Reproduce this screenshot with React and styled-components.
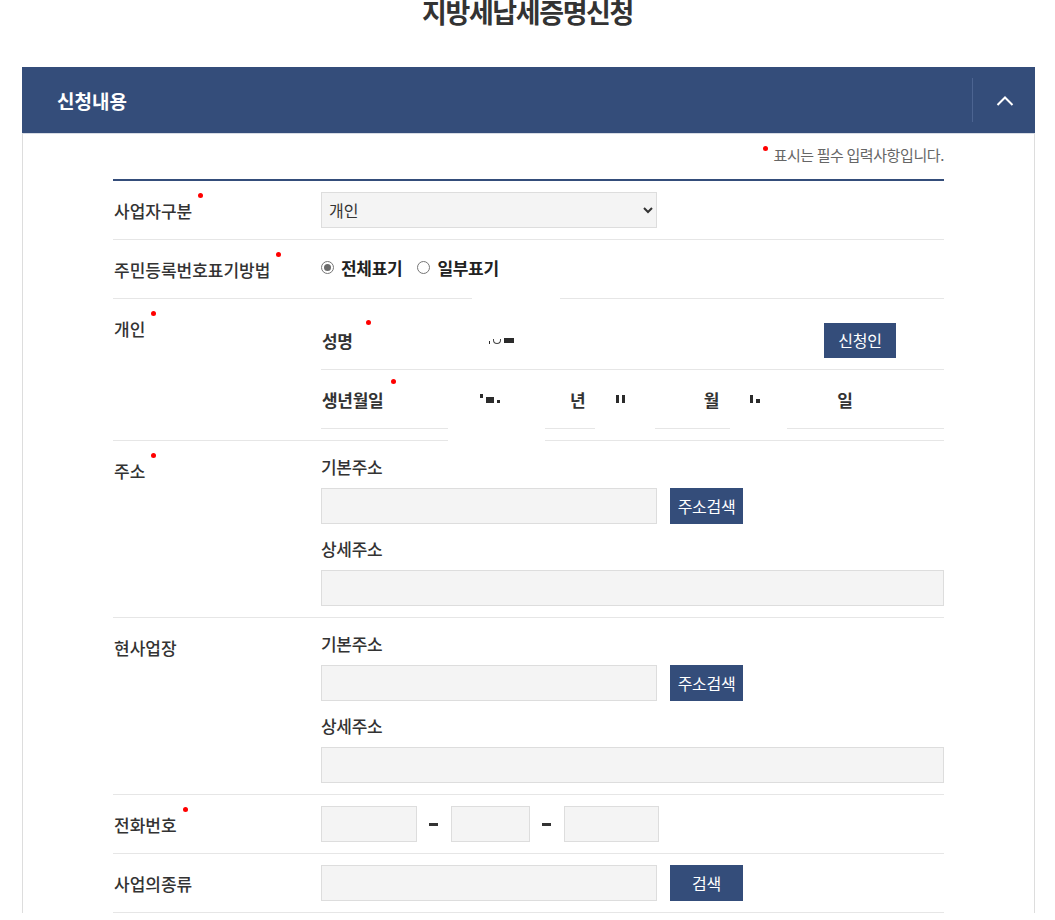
import styled, { createGlobalStyle } from 'styled-components';

const NAVY = '#344d7a';

const GlobalStyle = createGlobalStyle`
  * { box-sizing: border-box; }
  body {
    margin: 0;
    background: #fff;
    font-family: "Noto Sans CJK KR", "Noto Sans", sans-serif;
    color: #333;
  }
`;

const Page = styled.div`
  width: 1055px;
  overflow: hidden;
`;

const Title = styled.h1`
  margin: -5px 0 38px;
  font-size: 27px;
  line-height: 34px;
  font-weight: 700;
  letter-spacing: -1.4px;
  color: #333;
  text-align: center;
`;

const Panel = styled.section`
  margin-left: 22px;
  width: 1013px;
`;

const PanelHead = styled.div`
  height: 66px;
  background: ${NAVY};
  display: flex;
  align-items: center;
  justify-content: space-between;
  padding-left: 35px;
`;

const PanelTitle = styled.h2`
  margin: 0;
  font-size: 19px;
  font-weight: 700;
  letter-spacing: 0;
  color: #fff;
`;

const ToggleBtn = styled.button`
  width: 63px;
  height: 44px;
  border: none;
  border-left: 1px solid #4c6491;
  background: transparent;
  display: flex;
  align-items: center;
  justify-content: center;
  padding: 0 0 0 2px;
  cursor: pointer;
`;

const PanelBody = styled.div`
  border-left: 1px solid #ddd;
  border-right: 1px solid #ddd;
  border-top: 1px solid #d6dbe4;
  padding: 0 90px;
`;

const Notice = styled.p`
  margin: 0;
  padding: 11px 0 14px;
  text-align: right;
  font-size: 15px;
  line-height: 20px;
  letter-spacing: -0.4px;
  color: #666;
`;

const NoticeDot = styled.span`
  display: inline-block;
  width: 5px;
  height: 5px;
  border-radius: 50%;
  background: #f00;
  vertical-align: top;
  margin: 1px 6px 0 0;
`;

const Form = styled.div`
  border-top: 2px solid ${NAVY};
`;

const Row = styled.div`
  display: grid;
  grid-template-columns: 208px 1fr;
  border-bottom: 1px solid #e6e6e6;
`;

const Label = styled.div`
  padding: 20px 0 0 1px;
  font-size: 17px;
  line-height: 20px;
  font-weight: 500;
  letter-spacing: 0;
  color: #333;
`;

const Req = styled.span`
  display: inline-block;
  position: relative;
  top: -8px;
  width: 5px;
  height: 5px;
  margin-left: ${(p) => p.$gap || 6}px;
  border-radius: 50%;
  background: #f00;
  vertical-align: top;
`;

const Field = styled.div`
  padding: ${(p) => (p.$sub ? '12px 0 11px' : '11px 0')};
  display: flex;
  flex-direction: ${(p) => (p.$column ? 'column' : 'row')};
  align-items: ${(p) => (p.$column ? 'stretch' : 'center')};
  min-height: 58px;
`;

const Select = styled.select`
  width: 336px;
  height: 36px;
  padding: 0 3px;
  background: #f4f4f4;
  border: 1px solid #ddd;
  border-radius: 0;
  font-family: inherit;
  font-size: 16px;
  color: #333;
`;

const RadioGroup = styled.div`
  display: flex;
  align-items: center;
  height: 36px;
  gap: 15px;
  margin-top: -3px;
`;

const RadioLabel = styled.label`
  display: flex;
  align-items: center;
  gap: 7px;
  font-size: 17px;
  font-weight: 700;
  letter-spacing: -0.3px;
  color: #222;
`;

const RadioMark = styled.span`
  width: 13px;
  height: 13px;
  border-radius: 50%;
  border: 1px solid #767676;
  background: #fff;
  display: flex;
  align-items: center;
  justify-content: center;
  &::after {
    content: '';
    width: 7px;
    height: 7px;
    border-radius: 50%;
    background: ${(p) => (p.$on ? '#6b6b6b' : 'transparent')};
  }
`;

const SubRow = styled.div`
  position: relative;
  height: 59px;
  display: flex;
  align-items: center;
  border-bottom: 1px solid #e6e6e6;
`;

const SubLabel = styled.div`
  width: 150px;
  padding-left: 1px;
  font-size: 17px;
  font-weight: 700;
  letter-spacing: -0.3px;
  color: #333;
`;

const ValueBox = styled.div`
  width: ${(p) => p.$w}px;
  height: 36px;
  padding-left: ${(p) => p.$pad}px;
  display: flex;
  align-items: center;
  gap: 3px;
`;

const Blot = styled.span`
  display: inline-block;
  width: ${(p) => p.$w}px;
  height: ${(p) => p.$h}px;
  background: #2b2b2b;
  margin-top: ${(p) => p.$dy || 0}px;
  ${(p) => p.$round && 'background: transparent; border: 1px solid #444; border-top: none; border-radius: 0 0 4px 4px;'}
`;

const Mask = styled.span`
  position: absolute;
  background: #fff;
  left: ${(p) => p.$x}px;
  top: ${(p) => p.$y}px;
  width: ${(p) => p.$w}px;
  height: ${(p) => p.$h}px;
`;

const Unit = styled.span`
  margin: 0 8px 0 10px;
  font-size: 17px;
  font-weight: 700;
  color: #333;
`;

const Button = styled.button`
  width: ${(p) => p.$w || 73}px;
  height: ${(p) => p.$h || 36}px;
  border: none;
  background: ${NAVY};
  color: #fff;
  font-family: inherit;
  font-size: 16px;
  letter-spacing: -0.3px;
  padding: 0;
  flex-shrink: 0;
`;

const SmallLabel = styled.div`
  height: 30px;
  line-height: 30px;
  font-size: 17px;
  font-weight: 500;
  letter-spacing: -0.3px;
  color: #333;
  margin-top: ${(p) => p.$top || 0}px;
  margin-bottom: 6px;
`;

const InputLine = styled.div`
  display: flex;
  align-items: center;
  gap: 13px;
`;

const Input = styled.input`
  width: ${(p) => (p.$w ? `${p.$w}px` : '100%')};
  height: 36px;
  background: #f4f4f4;
  border: 1px solid #ddd;
  border-radius: 0;
  padding: 0 8px;
  font-family: inherit;
  font-size: 15px;
  flex-shrink: 0;
`;

const Dash = styled.span`
  display: inline-block;
  width: 9px;
  height: 3px;
  background: #333;
  margin: 0 13px 0 12px;
`;

function AddressFields() {
  return (
    <Field $column>
      <SmallLabel>기본주소</SmallLabel>
      <InputLine>
        <Input $w={336} />
        <Button>주소검색</Button>
      </InputLine>
      <SmallLabel $top={10}>상세주소</SmallLabel>
      <Input />
    </Field>
  );
}

export default function App() {
  return (
    <Page>
      <GlobalStyle />
      <Title>지방세납세증명신청</Title>
      <Panel>
        <PanelHead>
          <PanelTitle>신청내용</PanelTitle>
          <ToggleBtn aria-label="접기">
            <svg width="18" height="11" viewBox="0 0 18 11">
              <polyline points="1.5,10 9,2.5 16.5,10" fill="none" stroke="#fff" strokeWidth="2" />
            </svg>
          </ToggleBtn>
        </PanelHead>
        <PanelBody>
          <Notice>
            <NoticeDot />
            표시는 필수 입력사항입니다.
          </Notice>
          <Form>
            <Row>
              <Label>사업자구분<Req /></Label>
              <Field>
                <Select defaultValue="개인">
                  <option>개인</option>
                  <option>법인</option>
                </Select>
              </Field>
            </Row>
            <Row>
              <Label>주민등록번호표기방법<Req /></Label>
              <Field>
                <RadioGroup>
                  <RadioLabel><RadioMark $on />전체표기</RadioLabel>
                  <RadioLabel><RadioMark />일부표기</RadioLabel>
                </RadioGroup>
              </Field>
            </Row>
            <Row>
              <Label>개인<Req /></Label>
              <Field $column $sub>
                <SubRow>
                  <SubLabel>성명<Req $gap={13} /></SubLabel>
                  <ValueBox $w={353} $pad={18}>
                    <Blot $w={1} $h={3} $dy={4} />
                    <Blot $w={8} $h={5} $dy={2} $round />
                    <Blot $w={10} $h={5} $dy={0} />
                  </ValueBox>
                  <Button $w={72} $h={35}>신청인</Button>
                  <Mask $x={151} $y={-16} $w={88} $h={5} />
                </SubRow>
                <SubRow>
                  <SubLabel>생년월일<Req $gap={8} /></SubLabel>
                  <ValueBox $w={89} $pad={9}>
                    <Blot $w={3} $h={4} $dy={-6} />
                    <Blot $w={8} $h={6} $dy={2} />
                    <Blot $w={3} $h={3} $dy={4} />
                  </ValueBox>
                  <Unit>년</Unit>
                  <ValueBox $w={100} $pad={22}>
                    <Blot $w={3} $h={8} />
                    <Blot $w={3} $h={8} />
                  </ValueBox>
                  <Unit>월</Unit>
                  <ValueBox $w={100} $pad={23}>
                    <Blot $w={3} $h={8} />
                    <Blot $w={4} $h={4} $dy={4} />
                  </ValueBox>
                  <Unit>일</Unit>
                  <Mask $x={127} $y={50} $w={97} $h={25} />
                  <Mask $x={274} $y={50} $w={60} $h={10} />
                  <Mask $x={409} $y={50} $w={57} $h={10} />
                </SubRow>
              </Field>
            </Row>
            <Row>
              <Label>주소<Req /></Label>
              <AddressFields />
            </Row>
            <Row>
              <Label>현사업장</Label>
              <AddressFields />
            </Row>
            <Row>
              <Label>전화번호<Req /></Label>
              <Field>
                <Input $w={96} />
                <Dash />
                <Input $w={79} />
                <Dash />
                <Input $w={95} />
              </Field>
            </Row>
            <Row>
              <Label>사업의종류</Label>
              <Field>
                <InputLine>
                  <Input $w={336} />
                  <Button>검색</Button>
                </InputLine>
              </Field>
            </Row>
          </Form>
        </PanelBody>
      </Panel>
    </Page>
  );
}
